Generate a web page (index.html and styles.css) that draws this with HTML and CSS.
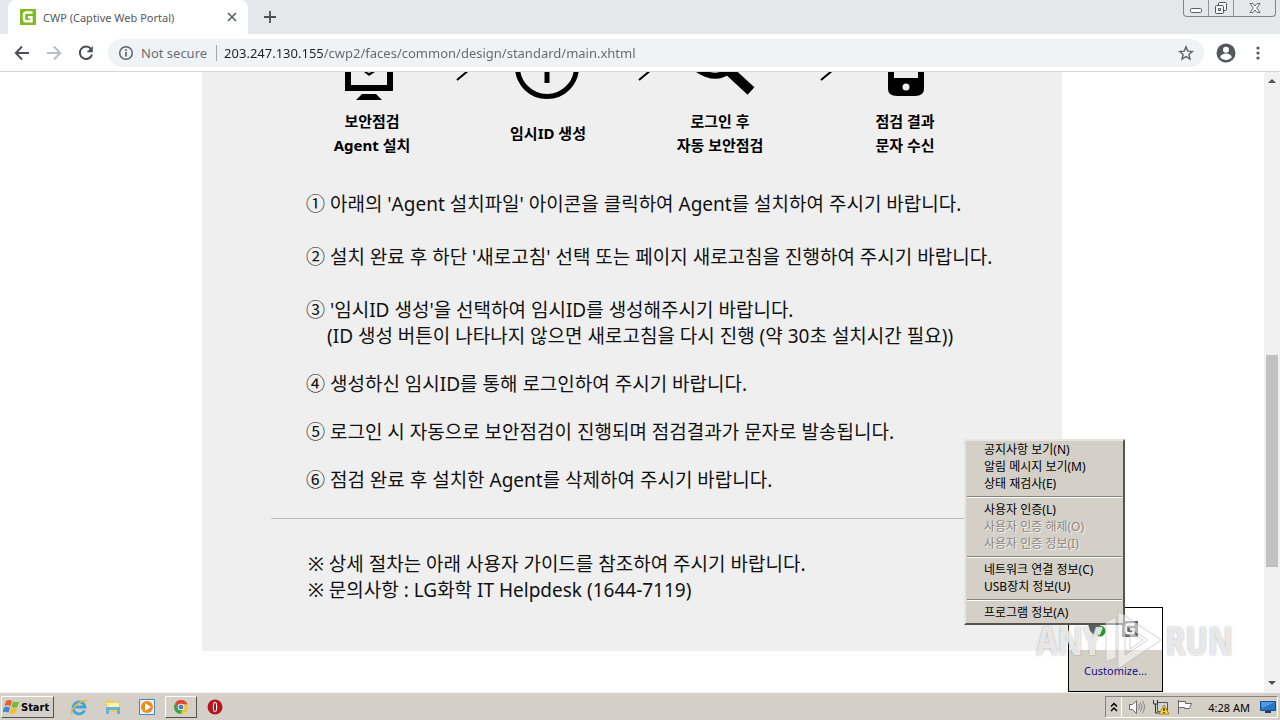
FILE: index.html
```html
<!DOCTYPE html>
<html lang="ko">
<head>
<meta charset="utf-8">
<title>CWP (Captive Web Portal)</title>
<link rel="stylesheet" href="styles.css">
</head>
<body>
<header class="tabs">
  <div class="tab">
    <svg class="favicon" viewBox="0 0 16 16"><path fill="#80ba27" d="M0 0h16v16H0z"/><path fill="none" stroke="#fff" stroke-width="2.4" d="M12.5 3.5H6.3Q4 3.5 4 6v4q0 2.3 2.3 2.3h5.2V8.2H8"/></svg>
    <span class="tab-title">CWP (Captive Web Portal)</span>
    <button class="icon-btn" aria-label="Close tab"><svg width="10" height="10" viewBox="0 0 10 10"><path d="M1 1l8 8M9 1L1 9" stroke="#5f6368" stroke-width="1.7"/></svg></button>
  </div>
  <button class="icon-btn new-tab" aria-label="New tab"><svg width="14" height="14" viewBox="0 0 14 14"><path d="M7 1v12M1 7h12" stroke="#4b4f54" stroke-width="1.8"/></svg></button>
  <div class="window-controls">
    <button class="win" aria-label="Minimize"><svg width="14" height="16" viewBox="0 0 14 16"><rect x="1.500" y="8.500" width="11" height="4" rx="1" fill="#fff" stroke="#5a5f66"/></svg></button>
    <button class="win" aria-label="Restore"><svg width="14" height="16" viewBox="0 0 14 16"><g fill="#f4f5f6" stroke="#50555c"><rect x="4.500" y="2.500" width="8" height="8" rx="1"/><rect x="1.500" y="5.500" width="8" height="8" rx="1"/><path d="M4.500 8.500h2v2h-2z"/></g></svg></button>
    <button class="win win-close" aria-label="Close"><svg width="14" height="16" viewBox="0 0 14 16"><path d="M2 3.500h3l2 2.500 2-2.500h3L8.700 8l3.300 4.500H9L7 10l-2 2.500H2L5.300 8z" fill="#fff" stroke="#62676e"/></svg></button>
  </div>
</header>
<nav class="toolbar">
  <button class="icon-btn" aria-label="Back"><svg width="16" height="16" viewBox="0 0 16 16"><path d="M15 8H2M8 1.500L1.800 8 8 14.500" fill="none" stroke="#4b4f54" stroke-width="1.900"/></svg></button>
  <button class="icon-btn" aria-label="Forward"><svg width="16" height="16" viewBox="0 0 16 16"><path d="M1 8h13M8 1.500L14.200 8 8 14.500" fill="none" stroke="#b9bcc0" stroke-width="1.900"/></svg></button>
  <button class="icon-btn" aria-label="Reload"><svg width="16" height="16" viewBox="0 0 16 16"><path d="M13 4A6.200 6.200 0 1 0 14 9.600" fill="none" stroke="#4b4f54" stroke-width="2"/><path d="M14.800 1v6.200H8.600z" fill="#4b4f54"/></svg></button>
  <div class="omnibox">
    <svg width="16" height="16" viewBox="0 0 16 16"><circle cx="8" cy="8" r="6.300" fill="none" stroke="#5f6368" stroke-width="1.500"/><path d="M8 7v4.500M8 4.300v1.600" stroke="#5f6368" stroke-width="1.700"/></svg>
    <label class="security" for="url">Not secure</label>
    <input class="url" id="url" type="text" value="203.247.130.155/cwp2/faces/common/design/standard/main.xhtml">
    <button class="icon-btn" aria-label="Bookmark"><svg width="16" height="16" viewBox="0 0 16 16"><path d="M8 1.900l1.800 4.200 4.600.4-3.500 3 1.100 4.500L8 11.600 4 14l1.100-4.500-3.500-3 4.600-.4z" fill="none" stroke="#5f6368" stroke-width="1.400"/></svg></button>
  </div>
  <button class="icon-btn profile" aria-label="Profile"><svg width="20" height="20" viewBox="0 0 20 20"><circle cx="10" cy="10" r="9.500" fill="#54585d"/><circle cx="10" cy="6.800" r="3" fill="#fff"/><path d="M4.300 14.200c0-2.400 3.800-3.700 5.700-3.700s5.700 1.300 5.700 3.700C14.300 16 12.300 17 10 17s-4.300-1-5.700-2.800z" fill="#fff"/></svg></button>
  <button class="icon-btn menu-dots" aria-label="Menu"><svg width="4" height="16" viewBox="0 0 4 16" fill="#54585d"><circle cx="2" cy="3" r="1.600"/><circle cx="2" cy="8" r="1.600"/><circle cx="2" cy="13" r="1.600"/></svg></button>
</nav>
<div class="viewport">
  <main class="page">
    <article class="card">
      <svg class="step-icons" viewBox="0 0 860 30" aria-hidden="true">
        <path fill="#000" d="M143 0h6v13h36V0h6v19h-48zM160 22h14l6 6h-26zM162 0h3l2 1 2-1h4l-6 4z"/>
        <g fill="none" stroke="#000">
          <circle stroke-width="5" cx="345" cy="-5" r="29.500"/>
          <path stroke-width="5" d="M345 -4v15"/>
          <path stroke-width="2" d="M255 8l12-10M437 8l12-10M619 8l12-10"/>
          <path stroke-width="6" d="M495-3q20 14 35-1"/>
          <path stroke-width="10" d="M523-5l26 24"/>
        </g>
        <path fill="#000" d="M686 0h36v17q0 7-9 7h-18q-9 0-9-7z"/><path fill="#efefef" d="M692 0h24v6h-24z"/><circle cx="704" cy="15" r="3.500" fill="#efefef"/>
      </svg>
      <div class="steps">
        <div>보안점검<br>Agent 설치</div><div>임시ID 생성</div><div>로그인 후<br>자동 보안점검</div><div>점검 결과<br>문자 수신</div>
      </div>
      <ul class="guide">
        <li>① 아래의 'Agent 설치파일' 아이콘을 클릭하여 Agent를 설치하여 주시기 바랍니다.</li>
        <li>② 설치 완료 후 하단 '새로고침' 선택 또는 페이지 새로고침을 진행하여 주시기 바랍니다.</li>
        <li>③ '임시ID 생성'을 선택하여 임시ID를 생성해주시기 바랍니다.<div class="sub">(ID 생성 버튼이 나타나지 않으면 새로고침을 다시 진행 (약 30초 설치시간 필요))</div></li>
      </ul>
      <ul class="guide guide-tight">
        <li>④ 생성하신 임시ID를 통해 로그인하여 주시기 바랍니다.</li>
        <li>⑤ 로그인 시 자동으로 보안점검이 진행되며 점검결과가 문자로 발송됩니다.</li>
        <li>⑥ 점검 완료 후 설치한 Agent를 삭제하여 주시기 바랍니다.</li>
      </ul>
      <hr class="rule">
      <div class="notes">
        <div>※ 상세 절차는 아래 사용자 가이드를 참조하여 주시기 바랍니다.</div>
        <div>※ 문의사항 : LG화학 IT Helpdesk (1644-7119)</div>
      </div>
    </article>
  </main>
  <div class="scrollbar">
    <svg width="16" height="17" viewBox="0 0 16 17"><path fill="#505050" d="M4 11l4-4 4 4z"/></svg>
    <div class="track"><div class="thumb"></div></div>
    <svg width="16" height="17" viewBox="0 0 16 17"><path fill="#505050" d="M4 6l4 4 4-4z"/></svg>
  </div>
  <aside class="tray-popup">
    <div class="tray-icons">
      <svg width="18" height="18" viewBox="0 0 18 18"><path d="M0 3h12v7H8l-2 4-4-4z" fill="#59605d"/><circle cx="12" cy="10" r="5.500" fill="#27943c"/><path d="M9.500 10l2 2.500L14 6.500" fill="none" stroke="#fff" stroke-width="1.700"/></svg>
      <svg width="16" height="16" viewBox="0 0 16 16"><path fill="#666" d="M0 0h16v16H0z"/><path fill="none" stroke="#fff" stroke-width="2.400" d="M12.500 3.500H6.300Q4 3.500 4 6v4q0 2.300 2.300 2.300h5.200V8.200H8"/></svg>
    </div>
    <a class="customize" href="#">Customize...</a>
  </aside>
  <div class="context-menu" role="menu">
    <button role="menuitem">공지사항 보기(N)</button>
    <button role="menuitem">알림 메시지 보기(M)</button>
    <button role="menuitem">상태 재검사(E)</button>
    <hr>
    <button role="menuitem">사용자 인증(L)</button>
    <button role="menuitem" disabled>사용자 인증 해제(O)</button>
    <button role="menuitem" disabled>사용자 인증 정보(I)</button>
    <hr>
    <button role="menuitem">네트워크 연결 정보(C)</button>
    <button role="menuitem">USB장치 정보(U)</button>
    <hr>
    <button role="menuitem">프로그램 정보(A)</button>
  </div>
  <div class="watermark">
    <span>ANY</span>
    <svg width="58" height="60" viewBox="0 0 58 60"><g fill="#fff" fill-opacity=".5" stroke="#b4b4b4" stroke-opacity=".6"><path d="M2 12l10-5v41l-10 4z"/><path fill-rule="evenodd" d="M14 1l43 29-43 29zM21 15v30l23-15z"/><path d="M26 22l13 8-13 9z"/></g></svg>
    <span>RUN</span>
  </div>
</div>
<footer class="taskbar">
  <button class="start"><svg width="17" height="16" viewBox="0 0 17 16"><path fill="#ef5b2b" d="M3 2q3-2 6 0L7.500 7q-3-1.500-6 0z"/><path fill="#78b833" d="M10 2.500q3 1.500 6 0L14.500 8q-3 1.500-6 0z"/><path fill="#3b87d4" d="M1 8.500q3-1.500 6 0L5.500 13.500q-3-1.500-6 0z"/><path fill="#f6bd25" d="M8 9q3 1.500 6 0l-1.500 5q-3 1.500-6 0z"/></svg>Start</button>
  <button class="launch" aria-label="Internet Explorer"><svg width="18" height="18" viewBox="0 0 18 18"><path d="M14.500 12.500A6 6 0 1 1 15 9H5" fill="none" stroke="#3fa4dc" stroke-width="2.800"/><path d="M2 16C-1 12 12 0 17 3" fill="none" stroke="#efb72f" stroke-width="1.500"/></svg></button>
  <button class="launch" aria-label="Explorer"><svg width="18" height="18" viewBox="0 0 18 18"><path fill="#efcb62" d="M2 2h6l1 2h7v10H2z"/><path fill="#fff3b0" d="M3 5h12v4H3z"/><path fill="#65b1dc" d="M2 9h14v7h-3v-4H5v4H2z"/></svg></button>
  <button class="launch" aria-label="Media Player"><svg width="16" height="16" viewBox="0 0 16 16"><path fill="#e6f1fb" stroke="#4689bd" d="M.5.5h15v15H.5z"/><circle cx="8" cy="8" r="6" fill="#f28a1b"/><path fill="#fff" d="M6 4l6 4-6 4z"/></svg></button>
  <button class="launch active" aria-label="Chrome"><svg width="16" height="16" viewBox="0 0 16 16"><circle cx="8" cy="8" r="7" fill="#f4c42f"/><path fill="#df4636" d="M8 8H4L2 4.400a7 7 0 0 1 12.500.8H8z"/><path fill="#34a257" d="M2 4.400A7 7 0 0 0 7.500 15L10 10 8 8H4z"/><circle cx="8" cy="8" r="3.300" fill="#fff"/><circle cx="8" cy="8" r="2.500" fill="#4285d4"/></svg></button>
  <button class="launch" aria-label="Opera"><svg width="16" height="16" viewBox="0 0 16 16"><circle cx="8" cy="8" r="7.500" fill="#b7141c"/><ellipse cx="8" cy="8" rx="2.200" ry="5.200" fill="#fff"/><ellipse cx="8" cy="8" rx="1" ry="4.500" fill="#9d1018"/></svg></button>
  <div class="tray">
    <button class="expand" aria-label="Show hidden icons"><svg width="8" height="10" viewBox="0 0 8 10"><path d="M1 4.500l3-3 3 3M1 9l3-3 3 3" fill="none" stroke="#000" stroke-width="1.500"/></svg></button>
    <svg width="18" height="16" viewBox="0 0 18 16"><path d="M1.500 5.500h3l4-4v13l-4-4h-3z" fill="#fff" stroke="#6c6c6c"/><path d="M10.500 5q2 3 0 6M12.500 3.500q3 4.500 0 9M14.500 2q4 6 0 12" fill="none" stroke="#858585"/></svg>
    <svg width="18" height="16" viewBox="0 0 18 16"><path d="M5.500 3.500h10v9h-10z" fill="#cfd4d6" stroke="#555"/><path d="M1.500 1v4h4V1M3.500 5v9h4" fill="none" stroke="#333"/><path d="M12 6l5 9H7z" fill="#ffd82b" stroke="#a88a14"/><path d="M12 9v3M12 13v1.300" stroke="#222" stroke-width="1.400"/></svg>
    <svg width="18" height="16" viewBox="0 0 18 16"><path d="M2.500 1v14M2.500 2.500h7v2h6l-2 5h-5v-1h-6" fill="#fff" stroke="#666"/></svg>
    <time class="clock">4:28 AM</time>
    <svg width="16" height="16" viewBox="0 0 16 16"><path fill="#2877c9" stroke="#174e92" d="M.5 2.500h15v9H.5z"/><path fill="#71b3ec" d="M1 3h14L2 9z" opacity=".6"/><path fill="#203d62" d="M5 12h6v2H5z"/></svg>
  </div>
</footer>
</body>
</html>
```

FILE: styles.css
```css
* { box-sizing: border-box; }
body {
  margin: 0;
  height: 100vh;
  display: flex;
  flex-direction: column;
  overflow: hidden;
  background: #fff;
  color: #111;
  font-family: "Noto Sans", "Noto Sans CJK KR", sans-serif;
}
button { border: 0; padding: 0; background: none; font: inherit; color: inherit; }
svg { flex: none; display: block; }
.icon-btn { display: grid; place-items: center; flex: none; }

.tabs { display: flex; height: 34px; flex: none; padding-left: 8px; background: #e4e8eb; }
.tab {
  display: flex;
  align-items: center;
  width: 240px;
  padding: 0 11px 0 12px;
  gap: 7px;
  background: #fff;
  border-radius: 8px 8px 0 0;
}
.favicon { width: 16px; height: 16px; }
.tab-title { flex: 1; font-size: 11px; color: #55595e; white-space: nowrap; }
.new-tab { margin-left: 15px; }
.window-controls {
  display: flex;
  height: 17px;
  margin: 0 4px 0 auto;
  border: 1px solid #7f858b;
  border-top: 0;
  border-radius: 0 0 4px 4px;
}
.win { display: grid; place-items: center; width: 25px; border-right: 1px solid #8f959b; }
.win-close { width: 41px; border-right: 0; }

.toolbar {
  display: flex;
  align-items: center;
  height: 38px;
  flex: none;
  padding: 0 20px 0 14px;
  gap: 16px;
  border-bottom: 1px solid #d5d7d9;
}
.omnibox {
  display: flex;
  align-items: center;
  flex: 1;
  height: 28px;
  margin-left: -2px;
  padding: 0 10px;
  gap: 7px;
  border-radius: 14px;
  background: #f0f3f5;
}
.security { font-size: 13px; line-height: 16px; color: #6a6e73; padding-right: 9px; border-right: 1px solid #a5a8ab; }
.url {
  flex: 1;
  min-width: 0;
  border: 0;
  padding: 0;
  outline: 0;
  font: 13px/20px "Noto Sans", sans-serif;
  color: #202124;
  background: linear-gradient(90deg, #202124 99px, #62666b 99px) text;
  -webkit-text-fill-color: transparent;
}
.profile { margin-left: -4px; }
.menu-dots { margin-left: 4px; }

.viewport { position: relative; display: flex; flex: 1; min-height: 0; }
.page { flex: 1; overflow: hidden; }
.card { max-width: 860px; margin: 0 auto; padding-bottom: 48px; background: #efefef; }
.step-icons { width: 100%; }
.steps {
  display: grid;
  grid-template-columns: 176px 176px 168px 202px;
  align-items: center;
  padding: 7px 0 34px 82px;
  text-align: center;
  font-size: 15px;
  line-height: 24px;
  font-weight: 700;
  color: #000;
}
.guide {
  display: flex;
  flex-direction: column;
  gap: 27px;
  margin: 0;
  padding: 0 0 0 104px;
  list-style: none;
  font-size: 19px;
  line-height: 26px;
  white-space: nowrap;
}
.guide-tight { gap: 22px; padding-top: 22px; }
.sub { padding-left: 21px; }
.rule { margin: 25px 69px 32px; border: 0; border-top: 1px solid #bdbdbd; }
.notes { padding-left: 106px; font-size: 19px; line-height: 26px; }

.scrollbar { display: flex; flex-direction: column; width: 16px; background: #f1f1f1; }
.track { flex: 1; display: grid; grid-template-rows: 266fr 212fr 108fr; padding: 0 2px; }
.thumb { grid-row: 2; background: #c1c1c1; }

.tray-popup {
  position: absolute;
  right: 117px;
  bottom: 0;
  width: 95px;
  border: 1px solid #000;
  background: #d4d0c8;
  text-align: center;
}
.tray-icons { display: flex; justify-content: center; gap: 16px; height: 42px; padding: 13px 6px 0 0; background: #fff; }
.customize { display: block; padding: 10px 0; font-size: 11px; line-height: 21px; color: #15108a; text-decoration: none; }
.context-menu {
  position: absolute;
  right: 155px;
  bottom: 67px;
  width: 161px;
  padding: 0 1px 2px;
  border: 2px solid;
  border-color: #e8e5df #55534f #55534f #e8e5df;
  background: #d4d0c8;
  color: #000;
  font-size: 12px;
  line-height: 17px;
}
.context-menu button { display: block; width: 100%; padding-left: 17px; text-align: left; }
.context-menu button:disabled { color: #8b8883; text-shadow: 1px 1px #f4f2ee; }
.context-menu hr { margin: 4px 0 3px; border: 0; border-top: 1px solid #85827d; border-bottom: 1px solid #fff; }
.watermark {
  position: absolute;
  right: 47px;
  bottom: 22px;
  display: flex;
  align-items: center;
  gap: 3px;
  font: 700 40px/36px "Liberation Sans Narrow", "Open Sans Condensed", "Liberation Sans", sans-serif;
  color: rgba(255, 255, 255, .75);
  text-shadow: 0 0 2px rgba(120, 120, 120, .7);
  pointer-events: none;
}

.taskbar {
  display: flex;
  align-items: center;
  height: 28px;
  flex: none;
  padding: 2px 2px 1px 1px;
  border-top: 1px solid #f5f3ef;
  background: #d4d0c8;
  color: #000;
  font-size: 11px;
}
.start, .active { border: 1px solid; border-color: #fff #55534f #55534f #fff; }
.start { display: flex; align-items: center; gap: 1px; width: 53px; height: 22px; padding-left: 1px; font: 700 11px "DejaVu Sans Condensed", sans-serif; margin-right: 8px; }
.launch { display: grid; place-items: center; width: 34px; height: 22px; }
.active { width: 32px; margin: 0 1px; }
.tray { display: flex; align-items: center; gap: 6px; height: 22px; margin-left: auto; padding-right: 1px; border: 1px solid; border-color: #85827d #fff #fff #85827d; }
.expand { display: grid; place-items: center; width: 16px; height: 20px; border-right: 1px solid #fff; }
.clock { margin: 0 4px 0 8px; }
```
